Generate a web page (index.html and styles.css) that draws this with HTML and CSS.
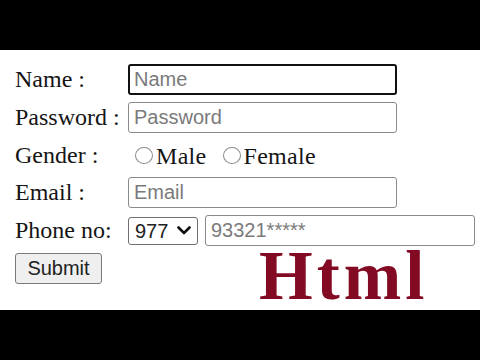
FILE: index.html
```html
<!DOCTYPE html>
<html lang="en">
<head>
<meta charset="utf-8">
<title>Form</title>
<link rel="stylesheet" href="styles.css">
</head>
<body>
<div class="bar"></div>
<main class="stage">
  <form class="form">
    <label class="lbl" for="name">Name :</label>
    <input class="field focused" id="name" type="text" placeholder="Name">

    <label class="lbl" for="pw">Password :</label>
    <input class="field" id="pw" type="password" placeholder="Password">

    <span class="lbl">Gender :</span>
    <div class="radios">
      <label class="opt"><input class="radio" type="radio" name="g"><span>Male</span></label>
      <label class="opt opt2"><input class="radio" type="radio" name="g"><span>Female</span></label>
    </div>

    <label class="lbl" for="em">Email :</label>
    <input class="field" id="em" type="email" placeholder="Email">

    <label class="lbl" for="ph">Phone no:</label>
    <div class="phone">
      <span class="selwrap">
        <select class="sel"><option>977</option></select>
        <svg class="chev" width="14" height="9" viewBox="0 0 14 9"><path d="M1.5 1.5 L7 7 L12.5 1.5" fill="none" stroke="#111" stroke-width="2.6" stroke-linecap="round" stroke-linejoin="round"/></svg>
      </span>
      <input class="field phonefield" id="ph" type="text" placeholder="93321*****">
    </div>

    <div class="submitrow"><button class="btn" type="button">Submit</button></div>
  </form>
  <div class="overlay">Html</div>
</main>
<div class="bar"></div>
</body>
</html>
```
FILE: styles.css
```css
html, body {
  margin: 0;
  padding: 0;
  background: #000;
}
body {
  width: 480px;
  height: 360px;
  overflow: hidden;
}
.bar {
  height: 50px;
  background: #000;
}
.stage {
  position: relative;
  height: 260px;
  background: #fff;
  box-sizing: border-box;
  padding: 14px 0 0 15px;
}
.form {
  display: grid;
  grid-template-columns: 113px auto;
  grid-auto-rows: 31px;
  row-gap: 6.75px;
  align-items: center;
  justify-items: start;
}
.lbl {
  font-family: "Liberation Serif", "Times New Roman", serif;
  font-size: 24px;
  color: #151515;
  white-space: pre;
}
.field {
  box-sizing: border-box;
  width: 269px;
  height: 31px;
  margin: 0;
  padding: 0 5px;
  border: 1px solid #8a8a8a;
  border-radius: 3px;
  background: #fff;
  font-family: "Liberation Sans", Arial, sans-serif;
  font-size: 20px;
  color: #222;
  outline: none;
}
.field::placeholder {
  color: #7a7a7a;
}
.focused {
  border: 2px solid #111;
  padding-left: 4px;
}
.radios {
  display: flex;
  align-items: center;
  height: 31px;
}
.opt {
  display: flex;
  align-items: center;
  font-family: "Liberation Serif", "Times New Roman", serif;
  font-size: 24px;
  color: #151515;
  letter-spacing: 0.3px;
}
.opt span {
  position: relative;
  top: 1px;
}
.radio {
  appearance: none;
  -webkit-appearance: none;
  box-sizing: border-box;
  width: 18px;
  height: 17px;
  margin: 0 3px 0 7px;
  border: 1px solid #8c8c8c;
  border-radius: 50%;
  background: #fff;
}
.opt2 .radio {
  margin-left: 16px;
}
.phone {
  display: flex;
  align-items: center;
  gap: 7px;
}
.selwrap {
  position: relative;
  display: inline-flex;
}
.sel {
  appearance: none;
  -webkit-appearance: none;
  box-sizing: border-box;
  width: 70px;
  height: 28px;
  margin: 0;
  padding: 0 0 0 6px;
  border: 1.5px solid #6f6f6f;
  border-radius: 3px;
  background: #fff;
  font-family: "Liberation Sans", Arial, sans-serif;
  font-size: 20px;
  color: #222;
}
.chev {
  position: absolute;
  left: 49px;
  top: 9px;
  pointer-events: none;
}
.phonefield {
  width: 270px;
}
.submitrow {
  grid-column: 1 / span 2;
}
.btn {
  box-sizing: border-box;
  width: 87px;
  height: 31px;
  margin: 0;
  padding: 0;
  border: 1px solid #7a7a7a;
  border-radius: 3px;
  background: #efefef;
  font-family: "Liberation Sans", Arial, sans-serif;
  font-size: 20px;
  color: #222;
}
.overlay {
  position: absolute;
  left: 259px;
  top: 192px;
  font-family: "Liberation Serif", "Times New Roman", serif;
  font-weight: bold;
  font-size: 69px;
  line-height: 69px;
  letter-spacing: 4px;
  color: #820a22;
}
```
